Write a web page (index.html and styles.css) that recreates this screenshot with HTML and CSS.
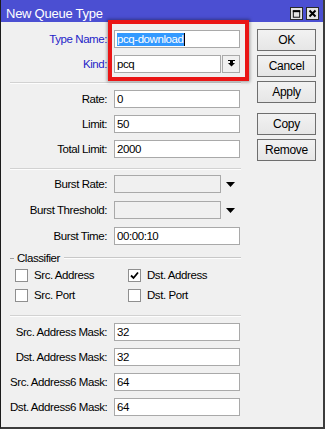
FILE: index.html
```html
<!DOCTYPE html>
<html>
<head>
<meta charset="utf-8">
<link rel="stylesheet" href="styles.css">
</head>
<body>
<div class="window">
  <div class="titlebar">
    <span class="title">New Queue Type</span>
    <div class="tbtns">
      <span class="tb"><svg width="12" height="12" viewBox="0 0 12 12"><rect x="2.5" y="2.5" width="7" height="7" fill="none" stroke="#000" stroke-width="1"/><rect x="2" y="2" width="8" height="2" fill="#000"/></svg></span>
      <span class="tb"><svg width="11" height="11" viewBox="0 0 11 11"><path d="M2.5 2.5 L8.5 8.5 M8.5 2.5 L2.5 8.5" stroke="#000" stroke-width="2" fill="none"/></svg></span>
    </div>
  </div>
  <div class="content">
    <div class="form">
      <div class="sec">
        <div class="row"><span class="lbl blue">Type Name:</span><div class="input"><span class="sel">pcq-download</span><span class="caret"></span></div></div>
        <div class="row"><span class="lbl blue">Kind:</span><div class="input short">pcq</div><span class="ddbtn"><svg width="16" height="16" viewBox="0 0 16 16"><rect x="5" y="4" width="7" height="1" fill="#000"/><rect x="7" y="5" width="3" height="2" fill="#000"/><polygon points="5,7 12,7 8.5,10.5" fill="#000"/></svg></span></div>
      </div>
      <div class="sep"></div>
      <div class="sec">
        <div class="row"><span class="lbl">Rate:</span><div class="input">0</div></div>
        <div class="row"><span class="lbl">Limit:</span><div class="input">50</div></div>
        <div class="row"><span class="lbl">Total Limit:</span><div class="input">2000</div></div>
      </div>
      <div class="sep sep2"></div>
      <div class="sec sec3">
        <div class="row"><span class="lbl">Burst Rate:</span><div class="input short disabled"></div><svg class="arrow" width="9" height="5" viewBox="0 0 9 5"><polygon points="0,0 9,0 4.5,5" fill="#000"/></svg></div>
        <div class="row"><span class="lbl">Burst Threshold:</span><div class="input short disabled"></div><svg class="arrow" width="9" height="5" viewBox="0 0 9 5"><polygon points="0,0 9,0 4.5,5" fill="#000"/></svg></div>
        <div class="row"><span class="lbl">Burst Time:</span><div class="input">00:00:10</div></div>
      </div>
      <div class="group-head"><span class="dash"></span><span class="gtitle">Classifier</span><span class="gline"></span></div>
      <div class="checks">
        <div class="chk"><span class="box"></span><span>Src. Address</span></div>
        <div class="chk"><span class="box"><svg width="11" height="11" viewBox="0 0 11 11"><path d="M2 5.5 L4.5 8 L9 2.5" stroke="#000" stroke-width="1.8" fill="none"/></svg></span><span>Dst. Address</span></div>
        <div class="chk"><span class="box"></span><span>Src. Port</span></div>
        <div class="chk"><span class="box"></span><span>Dst. Port</span></div>
      </div>
      <div class="sep sep3"></div>
      <div class="sec">
        <div class="row"><span class="lbl">Src. Address Mask:</span><div class="input">32</div></div>
        <div class="row"><span class="lbl">Dst. Address Mask:</span><div class="input">32</div></div>
        <div class="row"><span class="lbl">Src. Address6 Mask:</span><div class="input">64</div></div>
        <div class="row"><span class="lbl">Dst. Address6 Mask:</span><div class="input">64</div></div>
      </div>
    </div>
    <div class="buttons">
      <div class="btn">OK</div>
      <div class="btn">Cancel</div>
      <div class="btn">Apply</div>
      <div class="btn gap">Copy</div>
      <div class="btn">Remove</div>
    </div>
  </div>
  <div class="highlight"></div>
</div>
</body>
</html>
```

FILE: styles.css
```css
html, body {
  margin: 0;
  padding: 0;
  background: #f0f0f0;
}
body {
  font-family: "Liberation Sans", Arial, sans-serif;
  font-size: 11.5px;
  letter-spacing: -0.43px;
  color: #000;
}
.window {
  position: relative;
  width: 325px;
  height: 429px;
  box-sizing: border-box;
  border-left: 1px solid #1b1b1b;
  border-right: 2px solid #3c3c3c;
  border-bottom: 2px solid #3c3c3c;
  background: #f0f0f0;
  overflow: hidden;
}
.titlebar {
  height: 22px;
  box-sizing: border-box;
  padding: 6px 4px 0 5px;
  background: #4b4fd2;
  display: flex;
  align-items: center;
  justify-content: space-between;
}
.title {
  color: #fff;
  font-size: 13px;
  letter-spacing: -0.25px;
  line-height: 16px;
}
.tbtns {
  display: flex;
  gap: 3px;
  margin-top: -1px;
}
.tb {
  width: 13px;
  height: 13px;
  box-sizing: border-box;
  border: 1px solid #2a2a2a;
  background: #e4e4e4;
  display: flex;
  align-items: center;
  justify-content: center;
}
.content {
  display: flex;
  align-items: flex-start;
  padding: 8px 0 0 9px;
}
.form {
  width: 231px;
  display: flex;
  flex-direction: column;
}
.sec {
  display: flex;
  flex-direction: column;
  gap: 7px;
}
.sec3 {
  gap: 8px;
}
.row {
  display: flex;
  align-items: center;
  height: 18px;
}
.lbl {
  width: 97px;
  text-align: right;
  margin-right: 7px;
  white-space: nowrap;
  line-height: 14px;
}
.blue {
  color: #2424c8;
}
.input {
  width: 126px;
  height: 18px;
  box-sizing: border-box;
  border: 1px solid #a9a9a9;
  background: #fff;
  padding-left: 2px;
  line-height: 16px;
  display: flex;
  align-items: center;
  white-space: nowrap;
}
.input.short {
  width: 107px;
}
.input.disabled {
  background: #f0f0f0;
}
.sel {
  background: #3399ff;
  color: #fff;
  line-height: 13px;
  padding-right: 1px;
}
.caret {
  width: 1px;
  height: 13px;
  background: #000;
}
.ddbtn {
  width: 18px;
  height: 18px;
  margin-left: 1px;
  box-sizing: border-box;
  border: 1px solid #a9a9a9;
  background: #f0f0f0;
  display: flex;
  align-items: center;
  justify-content: center;
}
.arrow {
  margin-left: 5px;
  margin-top: 1px;
}
.sep {
  height: 0;
  border-top: 1px solid #d2d2d2;
  border-bottom: 1px solid #fdfdfd;
  margin: 9px 0 6px;
}
.sep2 {
  margin: 10px 0 5px;
}
.sep3 {
  margin: 13px 0 6px;
}
.group-head {
  display: flex;
  align-items: center;
  height: 12px;
  margin-top: 7px;
  line-height: 12px;
}
.dash {
  width: 4px;
  border-top: 1px solid #a0a0a0;
  margin-top: 1px;
}
.gtitle {
  margin: 0 4px 0 3px;
}
.gline {
  flex: 1;
  border-top: 1px solid #c8c8c8;
  border-bottom: 1px solid #fdfdfd;
}
.checks {
  display: grid;
  grid-template-columns: 113px 1fr;
  row-gap: 7px;
  padding-left: 5px;
  margin-top: 5px;
}
.chk {
  display: flex;
  align-items: center;
  height: 13px;
  gap: 6px;
  line-height: 13px;
}
.box {
  width: 13px;
  height: 13px;
  box-sizing: border-box;
  border: 1px solid #8f8f8f;
  background: #fff;
  display: flex;
  align-items: center;
  justify-content: center;
}
.buttons {
  margin-left: 16px;
  margin-top: -1px;
  width: 59px;
  display: flex;
  flex-direction: column;
  gap: 4px;
}
.btn {
  height: 22px;
  box-sizing: border-box;
  border: 1px solid #6e6e6e;
  background: linear-gradient(#f2f2f2, #e6e6e6);
  display: flex;
  align-items: center;
  justify-content: center;
  font-size: 12px;
  letter-spacing: -0.3px;
}
.btn.gap {
  margin-top: 6px;
}
.highlight {
  position: absolute;
  left: 107px;
  top: 20px;
  width: 141px;
  height: 61px;
  box-sizing: border-box;
  border: 4px solid #ea1515;
  box-shadow: 0 0 3px 1px rgba(0, 0, 0, 0.35);
}
```
